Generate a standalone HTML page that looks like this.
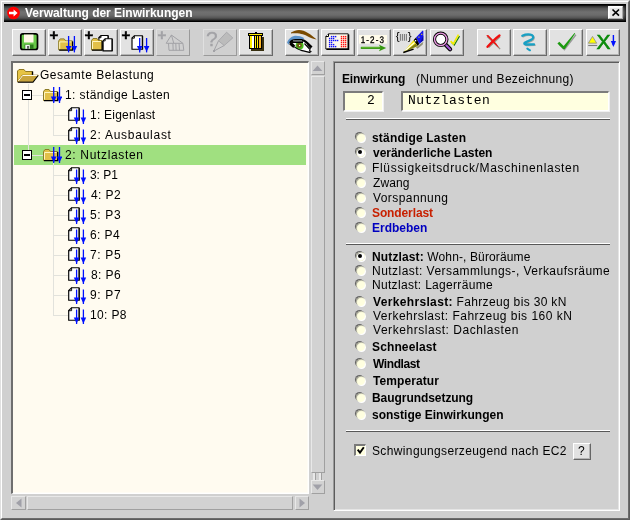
<!DOCTYPE html><html lang="de"><head><meta charset="utf-8"><title>Verwaltung der Einwirkungen</title><style>
html,body{margin:0;padding:0}
body{width:630px;height:520px;overflow:hidden;background:#d0d0d0;position:relative;font-family:"Liberation Sans",sans-serif;font-size:12px;color:#000}
.a{position:absolute}
.t{position:absolute;white-space:pre;line-height:14px;height:14px;will-change:transform}
.b{font-weight:bold}
.btn{position:absolute;top:29px;width:34px;height:27px;box-sizing:border-box;background:#e2e2e2;border:1px solid;border-color:#fff #6a6a6a #6a6a6a #fff;box-shadow:inset -1px -1px 0 #b4b4b4}
.btn.dis{background:#d0d0d0;border-color:#e0e0e0 #9a9a9a #9a9a9a #e0e0e0;box-shadow:none}
.btn svg{position:absolute;left:-1px;top:-1px;will-change:transform}
.sb{position:absolute;box-sizing:border-box;background:#d2d2d2;border:1px solid;border-color:#e8e8e8 #a0a0a0 #a0a0a0 #e8e8e8}
.radio{position:absolute;width:9px;height:9px;border-radius:50%;background:#ffffe0;box-sizing:border-box;box-shadow:-1px -1px 0 0 #666, 1px 1px 0 0 #fff, inset 1px 1px 1px -0.5px #8a8a80}
.radio.on{background:radial-gradient(circle,#fff 50%,#ffffd8 72%)}
.radio.on::after{content:"";position:absolute;left:2.5px;top:2.5px;width:4px;height:4px;border-radius:50%;background:#000}
.hl{position:absolute;background:#e2e2dc}
.sep{position:absolute;height:1px;background:#fff;box-shadow:0 1px 0 #585858}
.inp{position:absolute;box-sizing:border-box;background:#ffffe0;border:solid;border-width:2px 1px 1px 2px;border-color:#7c7c7c #fff #fff #7c7c7c;box-shadow:1px 1px 0 #f0f0f0}
</style></head><body>
<div class="a" style="left:0;top:0;width:630px;height:520px;box-sizing:border-box;border:1px solid;border-color:#e0e0e0 #5c5c5c #5c5c5c #e0e0e0"></div>
<div class="a" style="left:1px;top:1px;width:628px;height:518px;box-sizing:border-box;border:1px solid;border-color:#fff #6c6c6c #6c6c6c #fff"></div>
<div class="a" style="left:4px;top:4px;width:622px;height:18px;background:linear-gradient(to bottom,#000 0,#000 1px,#363636 2.5px,#585858 4.5px,#707070 8px,#6c6c6c 11px,#545454 14px,#2a2a2a 16px,#000 17.200px,#000 18px)"></div>
<div class="a" style="left:623px;top:4px;width:3px;height:18px;background:linear-gradient(to right,rgba(0,0,0,0),rgba(0,0,0,.6))"></div>
<svg class="a" style="left:6px;top:6px" width="16" height="16" viewBox="0 0 16 16"><circle cx="7.5" cy="7" r="6.3" fill="#f00"/><path d="M3 5.8h4.6V3.4L11.6 7 7.6 10.6V8.2H3z" fill="#fff"/></svg>
<div class="a" style="left:608px;top:6px;width:15px;height:13px;box-sizing:border-box;background:#e6e6e6;border:1px solid;border-color:#fff #aaa #aaa #fff;box-shadow:inset 1px 1px 0 #f8f8f8"><svg class="a" style="left:0;top:0" width="13" height="11" viewBox="0 0 13 11"><path d="M3.500 2.500l6.500 6.200M10 2.500l-6.500 6.200" stroke="#000" stroke-width="1.600" fill="none"/></svg></div>
<div class="btn" style="left:12px"><svg width="34" height="27" viewBox="0 0 34 27"><rect x="8.800" y="4.800" width="16.700" height="15.700" rx="2" fill="#68c848" stroke="#000" stroke-width="1.700"/><rect x="12" y="5.500" width="9.500" height="8" fill="#fff8e8"/><rect x="12.500" y="15.500" width="9" height="4.300" fill="#2c7a1c"/><rect x="13.300" y="15.800" width="4.500" height="4" fill="#f4f4f4"/><rect x="15.200" y="17" width="1.600" height="2.800" fill="#444"/></svg></div>
<div class="btn" style="left:48px"><svg width="34" height="27" viewBox="0 0 34 27"><text x="1.60" y="11.00" font-size="15" font-weight="bold" font-family="Liberation Sans,sans-serif" fill="#000" stroke="#000" stroke-width=".45">+</text><path d="M10.7 20.9V11.9l1.500-2h4l1.500 2H24.4V20.9z" fill="#e2c048" stroke="#8c7c28" stroke-width="1"/><path d="M11.7 19.9V12.9H23.4" stroke="#fff6c0" stroke-width="1" fill="none"/><path d="M11.2 21.099999999999998H24.599999999999998V12.4" stroke="#000" stroke-width="1.300" fill="none"/><path d="M20.6 7V23.4" stroke="#0010ff" stroke-width="1.300" fill="none"/><path d="M17.80 17.00h5.600L21.10 21.80h-1z" fill="#0010ff"/><path d="M26.4 7V23.4" stroke="#0010ff" stroke-width="1.300" fill="none"/><path d="M23.60 17.00h5.600L26.90 21.80h-1z" fill="#0010ff"/></svg></div>
<div class="btn" style="left:84px"><svg width="34" height="27" viewBox="0 0 34 27"><text x="0.60" y="11.00" font-size="15" font-weight="bold" font-family="Liberation Sans,sans-serif" fill="#000" stroke="#000" stroke-width=".45">+</text><path d="M17.0 6.5H24.0V17.0H14.899999999999999V8.6z" fill="#fff" stroke="#000" stroke-width="1.150"/><path d="M17.0 6.5v2.2h-2.2" fill="none" stroke="#000" stroke-width=".9"/><path d="M24.4 6.8V17.3" fill="none" stroke="#000" stroke-width=".9"/><path d="M7.5 21.0V11.5l1.500-2h4l1.500 2H18.0V21.0z" fill="#e2c048" stroke="#8c7c28" stroke-width="1"/><path d="M8.5 20.0V12.5H17.0" stroke="#fff6c0" stroke-width="1" fill="none"/><path d="M8 21.2H18.2V12" stroke="#000" stroke-width="1.300" fill="none"/><path d="M21.2 9.7H28.0V21.8H19.099999999999998V11.799999999999999z" fill="#fff" stroke="#000" stroke-width="1.150"/><path d="M21.2 9.7v2.2h-2.2" fill="none" stroke="#000" stroke-width=".9"/><path d="M28.4 10V22.1" fill="none" stroke="#000" stroke-width=".9"/></svg></div>
<div class="btn" style="left:120px"><svg width="34" height="27" viewBox="0 0 34 27"><text x="1.60" y="11.00" font-size="15" font-weight="bold" font-family="Liberation Sans,sans-serif" fill="#000" stroke="#000" stroke-width=".45">+</text><path d="M14.4 6.7H22.3V20.2H12.0V9.1z" fill="#fff" stroke="#000" stroke-width="1.150"/><path d="M14.4 6.7v2.5h-2.5" fill="none" stroke="#000" stroke-width=".9"/><path d="M22.7 7V20.5" fill="none" stroke="#000" stroke-width=".9"/><path d="M19.7 9V23.4" stroke="#0010ff" stroke-width="1.300" fill="none"/><path d="M16.90 17.00h5.600L20.20 21.80h-1z" fill="#0010ff"/><path d="M26.6 9V23.4" stroke="#0010ff" stroke-width="1.300" fill="none"/><path d="M23.80 17.00h5.600L27.10 21.80h-1z" fill="#0010ff"/></svg></div>
<div class="btn dis" style="left:156px"><svg width="34" height="27" viewBox="0 0 34 27"><text x="1.60" y="11.00" font-size="15" font-weight="bold" font-family="Liberation Sans,sans-serif" fill="#a2a2a6" stroke="#a2a2a6" stroke-width=".45">+</text><path d="M10.200 14.300L15.400 6l11.500 8.300zM12.500 14.300l.5 7h14.800l-.9-7M15.400 6l2.400 8.300M16.900 14.300l.3 7M23 14.300l.5 7M19.800 14.300l.3 7" fill="none" stroke="#a2a2a6" stroke-width="1"/></svg></div>
<div class="btn dis" style="left:203px"><svg width="34" height="27" viewBox="0 0 34 27"><text x="2.950" y="17" font-size="21" font-family="Liberation Sans,sans-serif" fill="#a2a2a6" stroke="#a2a2a6" stroke-width=".3">?</text><path d="M15.500 11.800L23.600 3.200l6.200 5.700-8.600 7.600z" fill="#bcbcbc" stroke="#a2a2a6" stroke-width=".8"/><path d="M15.500 11.800l-4.800 10.400 10.500-5.700" fill="none" stroke="#a2a2a6" stroke-width="1"/><rect x="10" y="21" width="2" height="2" fill="#a2a2a6"/></svg></div>
<div class="btn" style="left:239px"><svg width="34" height="27" viewBox="0 0 34 27"><g shape-rendering="crispEdges"><path d="M12 8h13v14h-13z" fill="#383010"/><rect x="10" y="6" width="13" height="14" fill="#000"/><rect x="11" y="7" width="11" height="12" fill="#ffee00"/><rect x="13" y="7" width="2" height="12" fill="#fff"/><rect x="20" y="7" width="2" height="12" fill="#ffb828"/><rect x="15" y="7" width="1" height="12" fill="#000"/><rect x="17" y="7" width="1" height="12" fill="#000"/><rect x="19" y="7" width="1" height="12" fill="#000"/><rect x="9" y="4" width="15" height="3" fill="#000"/><rect x="10" y="5" width="13" height="1" fill="#ffee00"/><rect x="16" y="3" width="2" height="1" fill="#000"/></g></svg></div>
<div class="btn" style="left:285px"><svg width="34" height="27" viewBox="0 0 34 27"><path d="M6 3.400C9 2.600 11 1.100 14 1.100c6 .2 12 4.400 17.700 9.500-3.200-.4-6.700-2.100-9.700-3.600C18 5 14 4.200 6 4.400z" fill="#7a4a00"/><path d="M2 13.500C3.500 10 6 7.500 9 7c3.500-.5 7 .5 10 2l-.6 1.800C14 9.800 10 9.600 7.500 10.800 5.500 12 4.500 14 3.500 15.700z" fill="#5c92c8"/><path d="M8 15c1-1.500 2.500-2.600 5-2.600h4c2 0 3.500 1 5 2.500l4.800 4.100c.5 1.500 .5 3 0 4.400-3-.8-6-1.200-9.500-2.400-4.500-1.400-6-3-9.300-6z" fill="#fff"/><circle cx="14.600" cy="16.500" r="4" fill="#48c020"/><circle cx="14.300" cy="16.300" r="2.500" fill="#6a5a10"/><rect x="14" y="15.900" width="1.200" height="1.200" fill="#fff"/><path d="M5 14c1.200-1.800 2.700-2.800 5.200-2.800h6.500c2 0 3.400 .8 4.800 2.200l5.300 4.800" stroke="#000" stroke-width="2.200" fill="none"/><path d="M7 13.200h11" stroke="#000" stroke-width="1.600"/><path d="M5.300 14c1 1.200 2.400 2.600 3.900 3.600" stroke="#000" stroke-width="3.200" fill="none"/><path d="M9 17.600c2.500 2 5 3.200 8 4 3 .8 6 1 8.500 2.100M19.500 14.500l5.800 6.300M22.300 15.300l3.700 4.200M24 21.600l2.500 1" stroke="#000" stroke-width="1.200" fill="none"/><path d="M8 11.700h9" stroke="#a0a8b0" stroke-width=".8"/></svg></div>
<div class="btn" style="left:321px"><svg width="34" height="27" viewBox="0 0 34 27"><path d="M7.500 4.800H27.200V20H4.800V7.500z" fill="#fffaea" stroke="#222" stroke-width="1"/><path d="M4.800 7.500h2.700v-2.700" fill="#fff" stroke="#000" stroke-width="1"/><path d="M5.500 20.300H27.500V5.500" stroke="#000" stroke-width="1.600" fill="none"/><rect x="9.9" y="6.9" width="1.400" height="1.400" fill="#1010ff"/><rect x="11.9" y="6.9" width="1.400" height="1.400" fill="#1010ff"/><rect x="13.9" y="6.9" width="1.400" height="1.400" fill="#1010ff"/><rect x="19.8" y="6.9" width="1.400" height="1.400" fill="#ff1010"/><rect x="21.9" y="6.9" width="1.400" height="1.400" fill="#ff1010"/><rect x="23.9" y="6.9" width="1.400" height="1.400" fill="#ff1010"/><rect x="7.9" y="8.8" width="1.400" height="1.400" fill="#1010ff"/><rect x="9.9" y="8.8" width="1.400" height="1.400" fill="#1010ff"/><rect x="11.9" y="8.8" width="1.400" height="1.400" fill="#1010ff"/><rect x="19.8" y="8.8" width="1.400" height="1.400" fill="#ff1010"/><rect x="21.9" y="8.8" width="1.400" height="1.400" fill="#ff1010"/><rect x="23.9" y="8.8" width="1.400" height="1.400" fill="#ff1010"/><rect x="7.9" y="10.8" width="1.400" height="1.400" fill="#1010ff"/><rect x="9.9" y="10.8" width="1.400" height="1.400" fill="#1010ff"/><rect x="11.9" y="10.8" width="1.400" height="1.400" fill="#1010ff"/><rect x="13.9" y="10.8" width="1.400" height="1.400" fill="#1010ff"/><rect x="15.9" y="10.8" width="1.400" height="1.400" fill="#1010ff"/><rect x="19.8" y="10.8" width="1.400" height="1.400" fill="#ff1010"/><rect x="21.9" y="10.8" width="1.400" height="1.400" fill="#ff1010"/><rect x="23.9" y="10.8" width="1.400" height="1.400" fill="#ff1010"/><rect x="7.9" y="12.8" width="1.400" height="1.400" fill="#1010ff"/><rect x="9.9" y="12.8" width="1.400" height="1.400" fill="#1010ff"/><rect x="19.8" y="12.8" width="1.400" height="1.400" fill="#ff1010"/><rect x="21.9" y="12.8" width="1.400" height="1.400" fill="#ff1010"/><rect x="23.9" y="12.8" width="1.400" height="1.400" fill="#ff1010"/><rect x="7.9" y="14.9" width="1.400" height="1.400" fill="#1010ff"/><rect x="9.9" y="14.9" width="1.400" height="1.400" fill="#1010ff"/><rect x="11.9" y="14.9" width="1.400" height="1.400" fill="#1010ff"/><rect x="19.8" y="14.9" width="1.400" height="1.400" fill="#ff1010"/><rect x="21.9" y="14.9" width="1.400" height="1.400" fill="#ff1010"/><rect x="23.9" y="14.9" width="1.400" height="1.400" fill="#ff1010"/><rect x="7.9" y="16.9" width="1.400" height="1.400" fill="#1010ff"/><rect x="9.9" y="16.9" width="1.400" height="1.400" fill="#1010ff"/><rect x="11.9" y="16.9" width="1.400" height="1.400" fill="#1010ff"/><rect x="13.9" y="16.9" width="1.400" height="1.400" fill="#1010ff"/><rect x="19.8" y="16.9" width="1.400" height="1.400" fill="#ff1010"/><rect x="21.9" y="16.9" width="1.400" height="1.400" fill="#ff1010"/><rect x="23.9" y="16.9" width="1.400" height="1.400" fill="#ff1010"/></svg></div>
<div class="btn" style="left:357px"><svg width="34" height="27" viewBox="0 0 34 27"><rect x="2" y="6" width="28" height="8.700" fill="#fffbea"/><text transform="scale(.84 1)" x="4.400" y="13.700" font-size="9.600" text-rendering="geometricPrecision" font-family="Liberation Sans,sans-serif" fill="#000" stroke="#000" stroke-width=".3" textLength="27.700" lengthAdjust="spacing">1-2-3</text><path d="M3.800 18.900h20" stroke="#369810" stroke-width="2.100"/><path d="M22 15.800l7.200 3.100-7.200 3.300 1.500-3.200z" fill="#369810"/><path d="M4.500 18.300h18" stroke="#78c840" stroke-width=".7"/></svg></div>
<div class="btn" style="left:393px"><svg width="34" height="27" viewBox="0 0 34 27"><text x="2.800" y="11.400" font-size="11.600" font-family="Liberation Sans,sans-serif" fill="#000">{</text><text x="14.700" y="11.400" font-size="11.600" font-family="Liberation Sans,sans-serif" fill="#000">}</text><path d="M7.400 4.900v6.800M9.400 4.900v6.800M11.400 4.900v6.800M13.400 4.900v6.800" stroke="#7a7a7a" stroke-width="1.100"/><path d="M23 18.500l5.500-4.500 2-1.300-1 3-5 4z" fill="#909078"/><path d="M29.700 1.500L23 8.400 26.200 15 30.300 11.600V2z" fill="#1414f0"/><path d="M30.300 6.500l-3 7 3-2z" fill="#0a0aa0"/><rect x="25.400" y="7.600" width="1.100" height="1.100" fill="#ffe800"/><rect x="28.200" y="4.800" width="1.100" height="1.100" fill="#ffe800"/><path d="M23 8.400L20.500 11.200 24.600 17 26.200 15z" fill="#000"/><rect x="21.800" y="11" width="1.400" height="1.400" fill="#fff"/><path d="M20.500 11.200L10.300 23.400 24.600 17z" fill="#f4e400"/><path d="M10.300 23.400L24.600 17l-1.800-2.600z" fill="#7c7c18"/><path d="M12.500 21.500l9-8" stroke="#fffff0" stroke-width="1.100"/><path d="M10.300 23.500l10.300-3.300" stroke="#000" stroke-width="1.400"/></svg></div>
<div class="btn" style="left:430px"><svg width="34" height="27" viewBox="0 0 34 27"><path d="M15.500 15.500l4.600 4.800" stroke="#000" stroke-width="4.200" stroke-linecap="round"/><path d="M16 16l4.200 4.400" stroke="#a858d8" stroke-width="2" stroke-linecap="round"/><circle cx="10.700" cy="10.300" r="6.200" fill="#fff" stroke="#000" stroke-width="3.200"/><circle cx="10.700" cy="10.300" r="6.200" fill="none" stroke="#e89ae0" stroke-width="1.400"/><path d="M21 12.600l2.600 2.600 5.200-9" stroke="#208010" stroke-width="1.200" fill="none" transform="translate(.7 .9)"/><path d="M20.600 12.200l2.700 2.700 5.200-9.200" stroke="#f4ec00" stroke-width="1.700" fill="none"/></svg></div>
<div class="btn" style="left:477px"><svg width="34" height="27" viewBox="0 0 34 27"><path d="M9.200 6.500c4 3.500 8 7.500 11 10.500l2 2.200" stroke="#989888" stroke-width="1.400" fill="none" transform="translate(.9 .9)"/><path d="M22.200 6.800l-11.500 10.800" stroke="#989888" stroke-width="1.400" transform="translate(.9 .9)"/><path d="M9.200 6.200l2-.2c3 2.800 6 6 8.500 9l2.600 4.200-3-2.700c-3-3-7-7-10.100-10.300z" fill="#f01010"/><path d="M22.500 6.500c-4 3-8 7-12 11.300" stroke="#f01010" stroke-width="2.300" fill="none" stroke-linecap="round"/></svg></div>
<div class="btn" style="left:513px"><svg width="34" height="27" viewBox="0 0 34 27"><g transform="translate(.8 .8)" stroke="#a8a8a0" fill="none" stroke-linecap="round"><path d="M9.300 6.800C12 5.500 15 5.200 17.500 5.600c2.500 .4 3.500 2.400 2 4.200-2 2.200-6.500 2.700-7.900 4-.8 1.200 .4 1.800 2.400 1.700L21 15.400" stroke-width="1.800"/></g><path d="M9.300 6.800C12 5.500 15 5.200 17.500 5.600c2.500 .4 3.500 2.400 2 4.200-2 2.200-6.500 2.700-7.900 4-.8 1.200 .4 1.800 2.400 1.700L21 15.400" stroke="#18a0c4" stroke-width="2.300" fill="none" stroke-linecap="round" stroke-linejoin="round"/><path d="M14.300 19.600l2.700 1.700" stroke="#18a0c4" stroke-width="2" stroke-linecap="round"/></svg></div>
<div class="btn" style="left:549px"><svg width="34" height="27" viewBox="0 0 34 27"><path d="M9.500 14.500l5 5.300 11.500-15" stroke="#989898" stroke-width="1.400" fill="none" transform="translate(.9 .9)"/><path d="M8.400 14.400l1.900-1.700 4.400 4.400L25.500 4.100l.7 .5-10.400 15.300h-1.700z" fill="#1c9a10"/></svg></div>
<div class="btn" style="left:586px"><svg width="34" height="27" viewBox="0 0 34 27"><path d="M6.500 7.400l4.200 6.800h-8.400z" fill="#ffff00" stroke="#8c8c8c" stroke-width=".8"/><path d="M2.200 16.500h9" stroke="#7c7c7c" stroke-width="1.100"/><text x="10.400" y="20" font-size="21" font-family="Liberation Sans,sans-serif" fill="#0a8a0a" stroke="#0a8a0a" stroke-width=".6">X</text><path d="M27.400 6v10" stroke="#0010ff" stroke-width="1.400"/><path d="M24.800 12h5.200l-2.600 6z" fill="#0010ff"/></svg></div>
<div class="a" style="left:11px;top:61px;width:298px;height:433px;box-sizing:border-box;background:#fffbf0;border:solid;border-width:2px 1px 1px 2px;border-color:#6e6e6e #fff #fff #6e6e6e;box-shadow:inset -1px -1px 0 #fffdf6"></div>
<div class="a" style="left:14px;top:145px;width:292px;height:20px;background:#a0e080"></div>
<div class="hl" style="left:28px;top:84px;width:1px;height:66px"></div>
<div class="hl" style="left:32px;top:95px;width:11px;height:1px"></div>
<div class="hl" style="left:32px;top:155px;width:11px;height:1px"></div>
<div class="hl" style="left:53px;top:103px;width:1px;height:33px"></div>
<div class="hl" style="left:54px;top:115px;width:14px;height:1px"></div>
<div class="hl" style="left:54px;top:135px;width:14px;height:1px"></div>
<div class="hl" style="left:53px;top:163px;width:1px;height:153px"></div>
<div class="hl" style="left:54px;top:175px;width:14px;height:1px"></div>
<div class="hl" style="left:54px;top:195px;width:14px;height:1px"></div>
<div class="hl" style="left:54px;top:215px;width:14px;height:1px"></div>
<div class="hl" style="left:54px;top:235px;width:14px;height:1px"></div>
<div class="hl" style="left:54px;top:255px;width:14px;height:1px"></div>
<div class="hl" style="left:54px;top:275px;width:14px;height:1px"></div>
<div class="hl" style="left:54px;top:295px;width:14px;height:1px"></div>
<div class="hl" style="left:54px;top:315px;width:14px;height:1px"></div>
<svg class="a" style="left:16px;top:68px" width="24" height="16" viewBox="0 0 24 16"><path d="M1.500 13.500V3l1.500-1.500h5l1.500 2h7v3.500" fill="#e6c444" stroke="#907820" stroke-width="1"/><path d="M16.500 3.500v3.500" stroke="#000" stroke-width="1.400"/><path d="M1.500 13.800l4.700-6.600h16l-5.400 6.600z" fill="#c8a43c" stroke="#806010" stroke-width=".8"/><path d="M2.300 13l4.300-5.500h14.800" stroke="#fffbe8" stroke-width="1" fill="none"/><path d="M1.800 14.300h15.200l5.200-6.800" stroke="#000" stroke-width="1.100" fill="none"/></svg>
<div class="a" style="left:22px;top:90px;width:10px;height:10px;box-sizing:border-box;border:1px solid #000;background:#fff"><div class="a" style="left:1px;top:3px;width:6px;height:2px;background:#000"></div></div>
<svg class="a" style="left:42px;top:86px" width="20" height="18" viewBox="0 0 20 18"><path d="M1.5 14.5V5.5l1.500-2h4l1.500 2H15.5V14.5z" fill="#e2c048" stroke="#8c7c28" stroke-width="1"/><path d="M2.5 13.5V6.5H14.5" stroke="#fff6c0" stroke-width="1" fill="none"/><path d="M2 14.7H15.7V6" stroke="#000" stroke-width="1.300" fill="none"/><path d="M11.7 1V17" stroke="#0010ff" stroke-width="1.300" fill="none"/><path d="M8.90 10.60h5.600L12.20 15.40h-1z" fill="#0010ff"/><path d="M17.5 1V17" stroke="#0010ff" stroke-width="1.300" fill="none"/><path d="M14.70 10.60h5.600L18.00 15.40h-1z" fill="#0010ff"/></svg>
<div class="a" style="left:22px;top:150px;width:10px;height:10px;box-sizing:border-box;border:1px solid #000;background:#fff"><div class="a" style="left:1px;top:3px;width:6px;height:2px;background:#000"></div></div>
<svg class="a" style="left:42px;top:146px" width="20" height="18" viewBox="0 0 20 18"><path d="M1.5 14.5V5.5l1.500-2h4l1.500 2H15.5V14.5z" fill="#e2c048" stroke="#8c7c28" stroke-width="1"/><path d="M2.5 13.5V6.5H14.5" stroke="#fff6c0" stroke-width="1" fill="none"/><path d="M2 14.7H15.7V6" stroke="#000" stroke-width="1.300" fill="none"/><path d="M11.7 1V17" stroke="#0010ff" stroke-width="1.300" fill="none"/><path d="M8.90 10.60h5.600L12.20 15.40h-1z" fill="#0010ff"/><path d="M17.5 1V17" stroke="#0010ff" stroke-width="1.300" fill="none"/><path d="M14.70 10.60h5.600L18.00 15.40h-1z" fill="#0010ff"/></svg>
<svg class="a" style="left:67px;top:107px" width="20" height="18" viewBox="0 0 20 18"><path d="M4.6 0.7H12V13.2H1.7V3.6z" fill="#fff" stroke="#000" stroke-width="1.150"/><path d="M4.6 0.7v3h-3" fill="none" stroke="#000" stroke-width=".9"/><path d="M12.4 1V13.5" fill="none" stroke="#000" stroke-width=".9"/><path d="M9.6 2.5V17" stroke="#0010ff" stroke-width="1.300" fill="none"/><path d="M6.80 10.60h5.600L10.10 15.40h-1z" fill="#0010ff"/><path d="M16.4 2.5V17" stroke="#0010ff" stroke-width="1.300" fill="none"/><path d="M13.60 10.60h5.600L16.90 15.40h-1z" fill="#0010ff"/></svg>
<svg class="a" style="left:67px;top:127px" width="20" height="18" viewBox="0 0 20 18"><path d="M4.6 0.7H12V13.2H1.7V3.6z" fill="#fff" stroke="#000" stroke-width="1.150"/><path d="M4.6 0.7v3h-3" fill="none" stroke="#000" stroke-width=".9"/><path d="M12.4 1V13.5" fill="none" stroke="#000" stroke-width=".9"/><path d="M9.6 2.5V17" stroke="#0010ff" stroke-width="1.300" fill="none"/><path d="M6.80 10.60h5.600L10.10 15.40h-1z" fill="#0010ff"/><path d="M16.4 2.5V17" stroke="#0010ff" stroke-width="1.300" fill="none"/><path d="M13.60 10.60h5.600L16.90 15.40h-1z" fill="#0010ff"/></svg>
<svg class="a" style="left:67px;top:167px" width="20" height="18" viewBox="0 0 20 18"><path d="M4.6 0.7H12V13.2H1.7V3.6z" fill="#fff" stroke="#000" stroke-width="1.150"/><path d="M4.6 0.7v3h-3" fill="none" stroke="#000" stroke-width=".9"/><path d="M12.4 1V13.5" fill="none" stroke="#000" stroke-width=".9"/><path d="M9.6 2.5V17" stroke="#0010ff" stroke-width="1.300" fill="none"/><path d="M6.80 10.60h5.600L10.10 15.40h-1z" fill="#0010ff"/><path d="M16.4 2.5V17" stroke="#0010ff" stroke-width="1.300" fill="none"/><path d="M13.60 10.60h5.600L16.90 15.40h-1z" fill="#0010ff"/></svg>
<svg class="a" style="left:67px;top:187px" width="20" height="18" viewBox="0 0 20 18"><path d="M4.6 0.7H12V13.2H1.7V3.6z" fill="#fff" stroke="#000" stroke-width="1.150"/><path d="M4.6 0.7v3h-3" fill="none" stroke="#000" stroke-width=".9"/><path d="M12.4 1V13.5" fill="none" stroke="#000" stroke-width=".9"/><path d="M9.6 2.5V17" stroke="#0010ff" stroke-width="1.300" fill="none"/><path d="M6.80 10.60h5.600L10.10 15.40h-1z" fill="#0010ff"/><path d="M16.4 2.5V17" stroke="#0010ff" stroke-width="1.300" fill="none"/><path d="M13.60 10.60h5.600L16.90 15.40h-1z" fill="#0010ff"/></svg>
<svg class="a" style="left:67px;top:207px" width="20" height="18" viewBox="0 0 20 18"><path d="M4.6 0.7H12V13.2H1.7V3.6z" fill="#fff" stroke="#000" stroke-width="1.150"/><path d="M4.6 0.7v3h-3" fill="none" stroke="#000" stroke-width=".9"/><path d="M12.4 1V13.5" fill="none" stroke="#000" stroke-width=".9"/><path d="M9.6 2.5V17" stroke="#0010ff" stroke-width="1.300" fill="none"/><path d="M6.80 10.60h5.600L10.10 15.40h-1z" fill="#0010ff"/><path d="M16.4 2.5V17" stroke="#0010ff" stroke-width="1.300" fill="none"/><path d="M13.60 10.60h5.600L16.90 15.40h-1z" fill="#0010ff"/></svg>
<svg class="a" style="left:67px;top:227px" width="20" height="18" viewBox="0 0 20 18"><path d="M4.6 0.7H12V13.2H1.7V3.6z" fill="#fff" stroke="#000" stroke-width="1.150"/><path d="M4.6 0.7v3h-3" fill="none" stroke="#000" stroke-width=".9"/><path d="M12.4 1V13.5" fill="none" stroke="#000" stroke-width=".9"/><path d="M9.6 2.5V17" stroke="#0010ff" stroke-width="1.300" fill="none"/><path d="M6.80 10.60h5.600L10.10 15.40h-1z" fill="#0010ff"/><path d="M16.4 2.5V17" stroke="#0010ff" stroke-width="1.300" fill="none"/><path d="M13.60 10.60h5.600L16.90 15.40h-1z" fill="#0010ff"/></svg>
<svg class="a" style="left:67px;top:247px" width="20" height="18" viewBox="0 0 20 18"><path d="M4.6 0.7H12V13.2H1.7V3.6z" fill="#fff" stroke="#000" stroke-width="1.150"/><path d="M4.6 0.7v3h-3" fill="none" stroke="#000" stroke-width=".9"/><path d="M12.4 1V13.5" fill="none" stroke="#000" stroke-width=".9"/><path d="M9.6 2.5V17" stroke="#0010ff" stroke-width="1.300" fill="none"/><path d="M6.80 10.60h5.600L10.10 15.40h-1z" fill="#0010ff"/><path d="M16.4 2.5V17" stroke="#0010ff" stroke-width="1.300" fill="none"/><path d="M13.60 10.60h5.600L16.90 15.40h-1z" fill="#0010ff"/></svg>
<svg class="a" style="left:67px;top:267px" width="20" height="18" viewBox="0 0 20 18"><path d="M4.6 0.7H12V13.2H1.7V3.6z" fill="#fff" stroke="#000" stroke-width="1.150"/><path d="M4.6 0.7v3h-3" fill="none" stroke="#000" stroke-width=".9"/><path d="M12.4 1V13.5" fill="none" stroke="#000" stroke-width=".9"/><path d="M9.6 2.5V17" stroke="#0010ff" stroke-width="1.300" fill="none"/><path d="M6.80 10.60h5.600L10.10 15.40h-1z" fill="#0010ff"/><path d="M16.4 2.5V17" stroke="#0010ff" stroke-width="1.300" fill="none"/><path d="M13.60 10.60h5.600L16.90 15.40h-1z" fill="#0010ff"/></svg>
<svg class="a" style="left:67px;top:287px" width="20" height="18" viewBox="0 0 20 18"><path d="M4.6 0.7H12V13.2H1.7V3.6z" fill="#fff" stroke="#000" stroke-width="1.150"/><path d="M4.6 0.7v3h-3" fill="none" stroke="#000" stroke-width=".9"/><path d="M12.4 1V13.5" fill="none" stroke="#000" stroke-width=".9"/><path d="M9.6 2.5V17" stroke="#0010ff" stroke-width="1.300" fill="none"/><path d="M6.80 10.60h5.600L10.10 15.40h-1z" fill="#0010ff"/><path d="M16.4 2.5V17" stroke="#0010ff" stroke-width="1.300" fill="none"/><path d="M13.60 10.60h5.600L16.90 15.40h-1z" fill="#0010ff"/></svg>
<svg class="a" style="left:67px;top:307px" width="20" height="18" viewBox="0 0 20 18"><path d="M4.6 0.7H12V13.2H1.7V3.6z" fill="#fff" stroke="#000" stroke-width="1.150"/><path d="M4.6 0.7v3h-3" fill="none" stroke="#000" stroke-width=".9"/><path d="M12.4 1V13.5" fill="none" stroke="#000" stroke-width=".9"/><path d="M9.6 2.5V17" stroke="#0010ff" stroke-width="1.300" fill="none"/><path d="M6.80 10.60h5.600L10.10 15.40h-1z" fill="#0010ff"/><path d="M16.4 2.5V17" stroke="#0010ff" stroke-width="1.300" fill="none"/><path d="M13.60 10.60h5.600L16.90 15.40h-1z" fill="#0010ff"/></svg>
<div class="sb" style="left:311px;top:61px;width:14px;height:14px"><svg class="a" style="left:0;top:0" width="12" height="12" viewBox="0 0 12 12"><path d="M5.500 3.500l4.800 5.500h-9.600z" fill="#a0a0a8"/></svg></div>
<div class="sb" style="left:311px;top:76px;width:14px;height:397px"></div>
<div class="a" style="left:313px;top:473px;width:2px;height:7px;background:#e8e8e8;box-shadow:1px 0 0 #a0a0a0"></div><div class="a" style="left:319px;top:473px;width:2px;height:7px;background:#e8e8e8;box-shadow:1px 0 0 #a0a0a0"></div>
<div class="sb" style="left:311px;top:480px;width:14px;height:14px"><svg class="a" style="left:0;top:0" width="12" height="12" viewBox="0 0 12 12"><path d="M5.500 9l4.800-5.500h-9.600z" fill="#a0a0a8"/></svg></div>
<div class="sb" style="left:11px;top:496px;width:15px;height:14px"><svg class="a" style="left:0;top:0" width="13" height="12" viewBox="0 0 13 12"><path d="M4 6l5.500-4.500v9z" fill="#a0a0a8"/></svg></div>
<div class="sb" style="left:27px;top:496px;width:266px;height:14px"></div>
<div class="sb" style="left:295px;top:496px;width:14px;height:14px"><svg class="a" style="left:0;top:0" width="12" height="12" viewBox="0 0 12 12"><path d="M9 6l-5.500-4.500v9z" fill="#a0a0a8"/></svg></div>
<div class="a" style="left:333px;top:61px;width:287px;height:450px;box-sizing:border-box;border:1px solid;border-color:#9a9a9a #fff #fff #9a9a9a;box-shadow:inset 1px 1px 0 #5c5c5c,inset -1px -1px 0 #e4e4e4"></div>
<div class="inp" style="left:343px;top:91px;width:40px;height:20px"></div>
<div class="inp" style="left:401px;top:91px;width:208px;height:20px"></div>
<div class="sep" style="left:346px;top:118px;width:264px"></div>
<div class="sep" style="left:346px;top:243px;width:264px"></div>
<div class="sep" style="left:346px;top:430px;width:264px"></div>
<div class="radio" style="left:355.600px;top:132.5px"></div>
<div class="radio on" style="left:355.600px;top:147.5px"></div>
<div class="radio" style="left:355.600px;top:162.5px"></div>
<div class="radio" style="left:355.600px;top:177.5px"></div>
<div class="radio" style="left:355.600px;top:192.5px"></div>
<div class="radio" style="left:355.600px;top:207.5px"></div>
<div class="radio" style="left:355.600px;top:222.5px"></div>
<div class="radio on" style="left:355.600px;top:251.5px"></div>
<div class="radio" style="left:355.600px;top:265.5px"></div>
<div class="radio" style="left:355.600px;top:279.5px"></div>
<div class="radio" style="left:355.600px;top:296.5px"></div>
<div class="radio" style="left:355.600px;top:310.5px"></div>
<div class="radio" style="left:355.600px;top:324.5px"></div>
<div class="radio" style="left:355.600px;top:341.5px"></div>
<div class="radio" style="left:355.600px;top:358.5px"></div>
<div class="radio" style="left:355.600px;top:375.5px"></div>
<div class="radio" style="left:355.600px;top:392.5px"></div>
<div class="radio" style="left:355.600px;top:409.5px"></div>
<div class="a" style="left:354px;top:444px;width:12px;height:12px;box-sizing:border-box;background:#ffffe0;border:solid;border-width:2px 1px 1px 2px;border-color:#7a7a7a #fff #fff #7a7a7a"><svg class="a" style="left:0;top:0" width="9" height="9" viewBox="0 0 9 9"><path d="M1.700 3.600l2.300 3 3.800-5.400" stroke="#000" stroke-width="1.900" fill="none"/></svg></div>
<div class="a" style="left:573px;top:443px;width:18px;height:17px;box-sizing:border-box;background:#e2e2e2;border:1px solid;border-color:#fff #666 #666 #fff;box-shadow:inset -1px -1px 0 #b4b4b4"></div>
<div class="t b" style="left:25.0px;top:6px;letter-spacing:-0.019px;color:#fff">Verwaltung der Einwirkungen</div>
<div class="t " style="left:39.5px;top:68px;letter-spacing:0.525px;">Gesamte Belastung</div>
<div class="t " style="left:65.3px;top:88px;letter-spacing:0.394px;">1: ständige Lasten</div>
<div class="t " style="left:89.9px;top:108px;letter-spacing:0.227px;">1: Eigenlast</div>
<div class="t " style="left:89.9px;top:128px;letter-spacing:0.742px;">2: Ausbaulast</div>
<div class="t " style="left:65.3px;top:148px;letter-spacing:0.667px;">2: Nutzlasten</div>
<div class="t " style="left:89.9px;top:168px;letter-spacing:-0.050px;">3: P1</div>
<div class="t " style="left:90.9px;top:188px;letter-spacing:0.425px;">4: P2</div>
<div class="t " style="left:89.9px;top:208px;letter-spacing:0.675px;">5: P3</div>
<div class="t " style="left:89.9px;top:228px;letter-spacing:0.425px;">6: P4</div>
<div class="t " style="left:89.9px;top:248px;letter-spacing:0.675px;">7: P5</div>
<div class="t " style="left:90.9px;top:268px;letter-spacing:0.425px;">8: P6</div>
<div class="t " style="left:89.9px;top:288px;letter-spacing:0.675px;">9: P7</div>
<div class="t " style="left:89.9px;top:308px;letter-spacing:0.360px;">10: P8</div>
<div class="t b" style="left:342.1px;top:72px;letter-spacing:-0.156px;">Einwirkung</div>
<div class="t " style="left:415.6px;top:72px;letter-spacing:0.322px;">(Nummer und Bezeichnung)</div>
<div class="t " style="left:366.7px;top:94px;letter-spacing:0.000px;font-family:'Liberation Mono',monospace;font-size:13px">2</div>
<div class="t " style="left:407.7px;top:94px;letter-spacing:0.411px;font-family:'Liberation Mono',monospace;font-size:13px">Nutzlasten</div>
<div class="t b" style="left:371.9px;top:131px;letter-spacing:0.186px;">ständige Lasten</div>
<div class="t b" style="left:372.9px;top:146px;letter-spacing:-0.037px;">veränderliche Lasten</div>
<div class="t " style="left:371.9px;top:161px;letter-spacing:0.678px;">Flüssigkeitsdruck/Maschinenlasten</div>
<div class="t " style="left:372.9px;top:176px;letter-spacing:0.125px;">Zwang</div>
<div class="t " style="left:372.9px;top:191px;letter-spacing:0.420px;">Vorspannung</div>
<div class="t b" style="left:371.9px;top:206px;letter-spacing:-0.111px;color:#c82000">Sonderlast</div>
<div class="t b" style="left:371.9px;top:221px;letter-spacing:-0.014px;color:#0000c0">Erdbeben</div>
<div class="t " style="left:371.9px;top:250px;letter-spacing:0.128px;"><b>Nutzlast:</b> Wohn-, Büroräume</div>
<div class="t " style="left:371.9px;top:264px;letter-spacing:0.459px;">Nutzlast: Versammlungs-, Verkaufsräume</div>
<div class="t " style="left:371.9px;top:278px;letter-spacing:0.311px;">Nutzlast: Lagerräume</div>
<div class="t " style="left:372.9px;top:295px;letter-spacing:0.342px;"><b>Verkehrslast:</b> Fahrzeug bis 30 kN</div>
<div class="t " style="left:372.9px;top:309px;letter-spacing:0.481px;">Verkehrslast: Fahrzeug bis 160 kN</div>
<div class="t " style="left:372.9px;top:323px;letter-spacing:0.548px;">Verkehrslast: Dachlasten</div>
<div class="t " style="left:371.9px;top:340px;letter-spacing:0.133px;"><b>Schneelast</b></div>
<div class="t " style="left:372.9px;top:357px;letter-spacing:-0.400px;"><b>Windlast</b></div>
<div class="t " style="left:372.9px;top:374px;letter-spacing:0.078px;"><b>Temperatur</b></div>
<div class="t " style="left:371.9px;top:391px;letter-spacing:-0.057px;"><b>Baugrundsetzung</b></div>
<div class="t " style="left:371.9px;top:408px;letter-spacing:0.010px;"><b>sonstige Einwirkungen</b></div>
<div class="t " style="left:371.8px;top:444px;letter-spacing:0.371px;">Schwingungserzeugend nach EC2</div>
<div class="t " style="left:577.5px;top:444px;letter-spacing:0.000px;">?</div>
</body></html>
